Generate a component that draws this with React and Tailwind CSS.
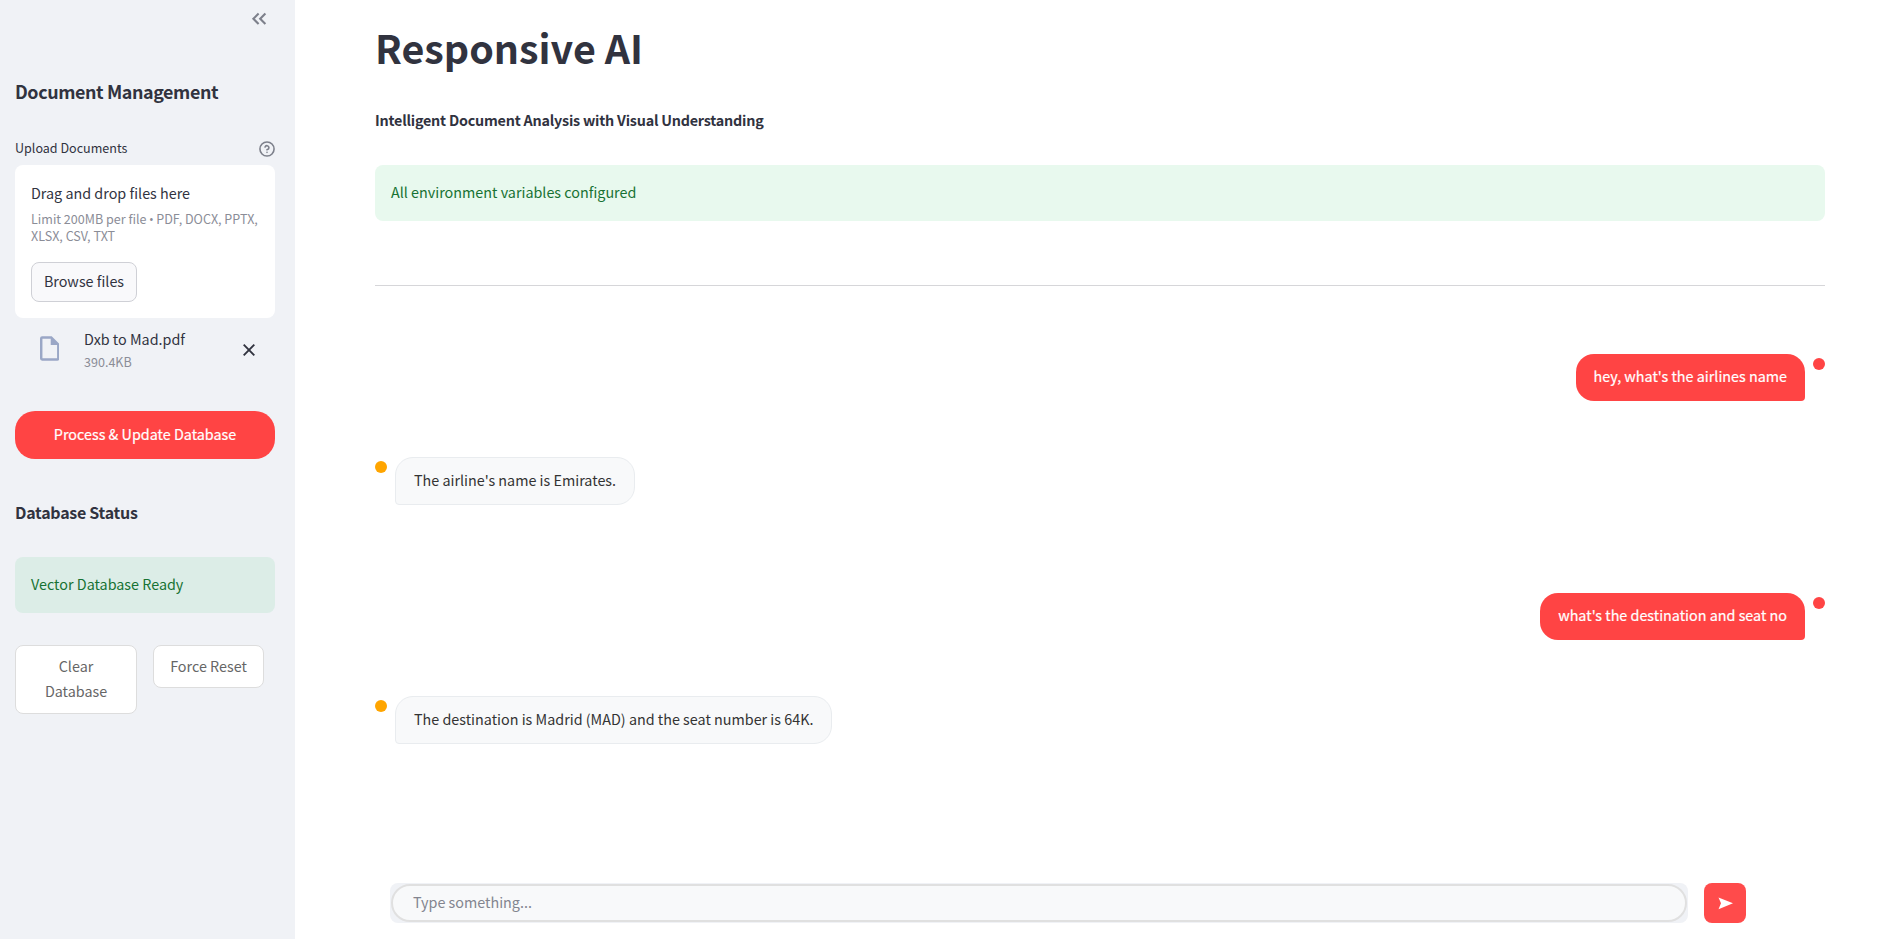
function UserMessage({ children }) {
  return (
    <div className="flex h-[47px] items-start justify-end gap-2">
      <div className="flex h-[47px] items-start rounded-[18px] rounded-br-[4px] bg-[#ff4444] px-[18px] pt-[10px] text-[14.35px] leading-6 text-white [-webkit-text-stroke:0.2px_white]">
        {children}
      </div>
      <span className="mt-1 size-3 rounded-full bg-[#ff4444]" />
    </div>
  );
}

function BotMessage({ children }) {
  return (
    <div className="flex h-12 items-start gap-2">
      <span className="mt-1 size-3 rounded-full bg-[#ffa500]" />
      <div className="flex h-12 items-start rounded-[18px] rounded-bl-[4px] border border-[#e9ecef] bg-[#f8f9fa] px-[18px] pt-[10px] text-[14.35px] leading-6 text-[#333333]">
        {children}
      </div>
    </div>
  );
}

function Sidebar() {
  return (
    <aside className="flex h-full w-[295px] shrink-0 flex-col bg-[#f0f2f6] pr-5 pl-[15px]">
      <div className="flex h-[75px] justify-end pt-[9px] pr-[5px]">
        <svg className="size-5 text-[#7d808b]" viewBox="0 0 20 20" fill="none" stroke="currentColor" strokeWidth="2.1">
          <path d="M8.600 4.600 3.400 9.800l5.200 5.200M15.400 4.600l-5.200 5.200 5.200 5.200" />
        </svg>
      </div>
      <h2 className="h-[62px] text-[17.9px] leading-8 font-semibold tracking-[-0.4px]">Document Management</h2>
      <div className="flex h-7 items-start justify-between">
        <span className="text-[12.55px] leading-[22px]">Upload Documents</span>
        <svg className="mt-1 size-4 text-[#7d808b]" viewBox="0 0 24 24" fill="none" stroke="currentColor" strokeWidth="2.4" strokeLinecap="round" strokeLinejoin="round">
          <circle cx="12" cy="12" r="10.6" />
          <path d="M9.09 9a3 3 0 0 1 5.83 1c0 2-3 3-3 3M12 17h.01" />
        </svg>
      </div>
      <div className="h-[153px] rounded-lg bg-white px-4 pt-4">
        <div className="text-[14.35px] leading-6">Drag and drop files here</div>
        <div className="mt-[5px] h-[34px] text-[12.55px] leading-[17px] whitespace-nowrap text-[#8b8d97]">
          Limit 200MB per file <span className="font-['Open_Sans'] text-[12.5px] leading-none -mx-[0.3px]">•</span> PDF, DOCX, PPTX,
          <br />
          XLSX, CSV, TXT
        </div>
        <button className="mt-[18px] flex h-10 w-[106px] items-start justify-center rounded-lg border border-[#cfd0d6] bg-[#f9f9fb] pt-[6px] text-[14.35px] leading-6">
          Browse files
        </button>
      </div>
      <div className="flex h-[93px] items-start pt-[9px]">
        <svg className="mt-[9px] ml-[24.5px] h-[25px] w-[19.5px] shrink-0" viewBox="0 0 20 25">
          <path d="M2.200 0H12l8 8v14.800a2.200 2.200 0 0 1-2.200 2.200H2.200A2.200 2.200 0 0 1 0 22.800V2.200A2.200 2.200 0 0 1 2.200 0ZM2.500 2.500v20h15V9H11V2.500Z" fill="#9aa7c6" fillRule="evenodd" />
        </svg>
        <div className="ml-[25px] grow">
          <div className="text-[14.35px] leading-6">Dxb to Mad.pdf</div>
          <div className="text-[12.55px] leading-[21px] text-[#8b8d97]">390.4KB</div>
        </div>
        <svg className="mt-[17px] mr-5 size-3" viewBox="0 0 12 12" fill="none" stroke="#31333f" strokeWidth="1.9">
          <path d="m.7.7 10.600 10.600M11.300.7.7 11.300" />
        </svg>
      </div>
      <button className="flex h-12 items-start justify-center rounded-[20px] bg-[#ff4444] pt-[11px] text-[14.35px] leading-6 text-white [-webkit-text-stroke:0.2px_white]">
        Process &amp; Update Database
      </button>
      <h3 className="mt-[39px] h-[59px] text-[16px] leading-7 font-semibold tracking-[-0.27px]">Database Status</h3>
      <div className="h-14 rounded-lg bg-[#dcede7] px-4 pt-[15px] text-[14.35px] leading-6 text-[#177233]">
        Vector Database Ready
      </div>
      <div className="mt-8 flex items-start gap-4">
        <button className="flex h-[69px] w-[122px] items-start rounded-lg border border-[#dddddd] bg-white px-4 pt-[7px] text-[14.35px] leading-[25px] text-[#666666]">
          Clear Database
        </button>
        <button className="flex h-[43px] w-[111px] items-start justify-center rounded-lg border border-[#dddddd] bg-white pt-[7px] text-[14.35px] leading-[25px] text-[#666666]">
          Force Reset
        </button>
      </div>
    </aside>
  );
}

export default function App() {
  return (
    <div className="flex h-[939px] w-[1900px] overflow-hidden bg-white font-['Noto_Sans_CJK_SC',sans-serif] text-[#31333f]">
      <Sidebar />
      <main className="flex h-full grow flex-col pr-[75px] pl-20">
        <h1 className="h-[106px] pt-[19px] text-[39.4px] leading-[56px] font-bold">Responsive AI</h1>
        <p className="h-[59px] pt-[2px] text-[14.35px] leading-6 font-semibold tracking-[-0.22px]">
          Intelligent Document Analysis with Visual Understanding
        </p>
        <div className="h-14 rounded-lg bg-[#e8f9ee] px-4 pt-[15px] text-[14.35px] leading-6 text-[#177233]">
          All environment variables configured
        </div>
        <hr className="mt-16 border-t border-[#d6d6d9]" />
        <div className="mt-[68px] flex flex-col">
          <UserMessage>hey, what's the airlines name</UserMessage>
          <div className="mt-14">
            <BotMessage>The airline's name is Emirates.</BotMessage>
          </div>
          <div className="mt-[88px]">
            <UserMessage>what's the destination and seat no</UserMessage>
          </div>
          <div className="mt-14">
            <BotMessage>The destination is Madrid (MAD) and the seat number is 64K.</BotMessage>
          </div>
        </div>
        <form className="mt-[139px] flex gap-4 pl-[15px]">
          <div className="h-10 w-[1298px] rounded-lg bg-[#f0f2f6] p-px">
            <div className="flex h-[38px] items-start rounded-[20px] border-2 border-[#e0e0e0] bg-[#f8f9fa] px-[20px] pt-[4px] text-[14.35px] leading-6 text-[#83858f]">
              Type something...
            </div>
          </div>
          <button type="button" className="flex h-10 w-[42px] items-center justify-center rounded-lg bg-[#ff4b4b]">
            <svg className="size-[15px]" viewBox="0 0 15 15" fill="white">
              <path d="M.5 1.500 15 7.300.5 13.200 3 7.300Z" />
            </svg>
          </button>
        </form>
      </main>
    </div>
  );
}
